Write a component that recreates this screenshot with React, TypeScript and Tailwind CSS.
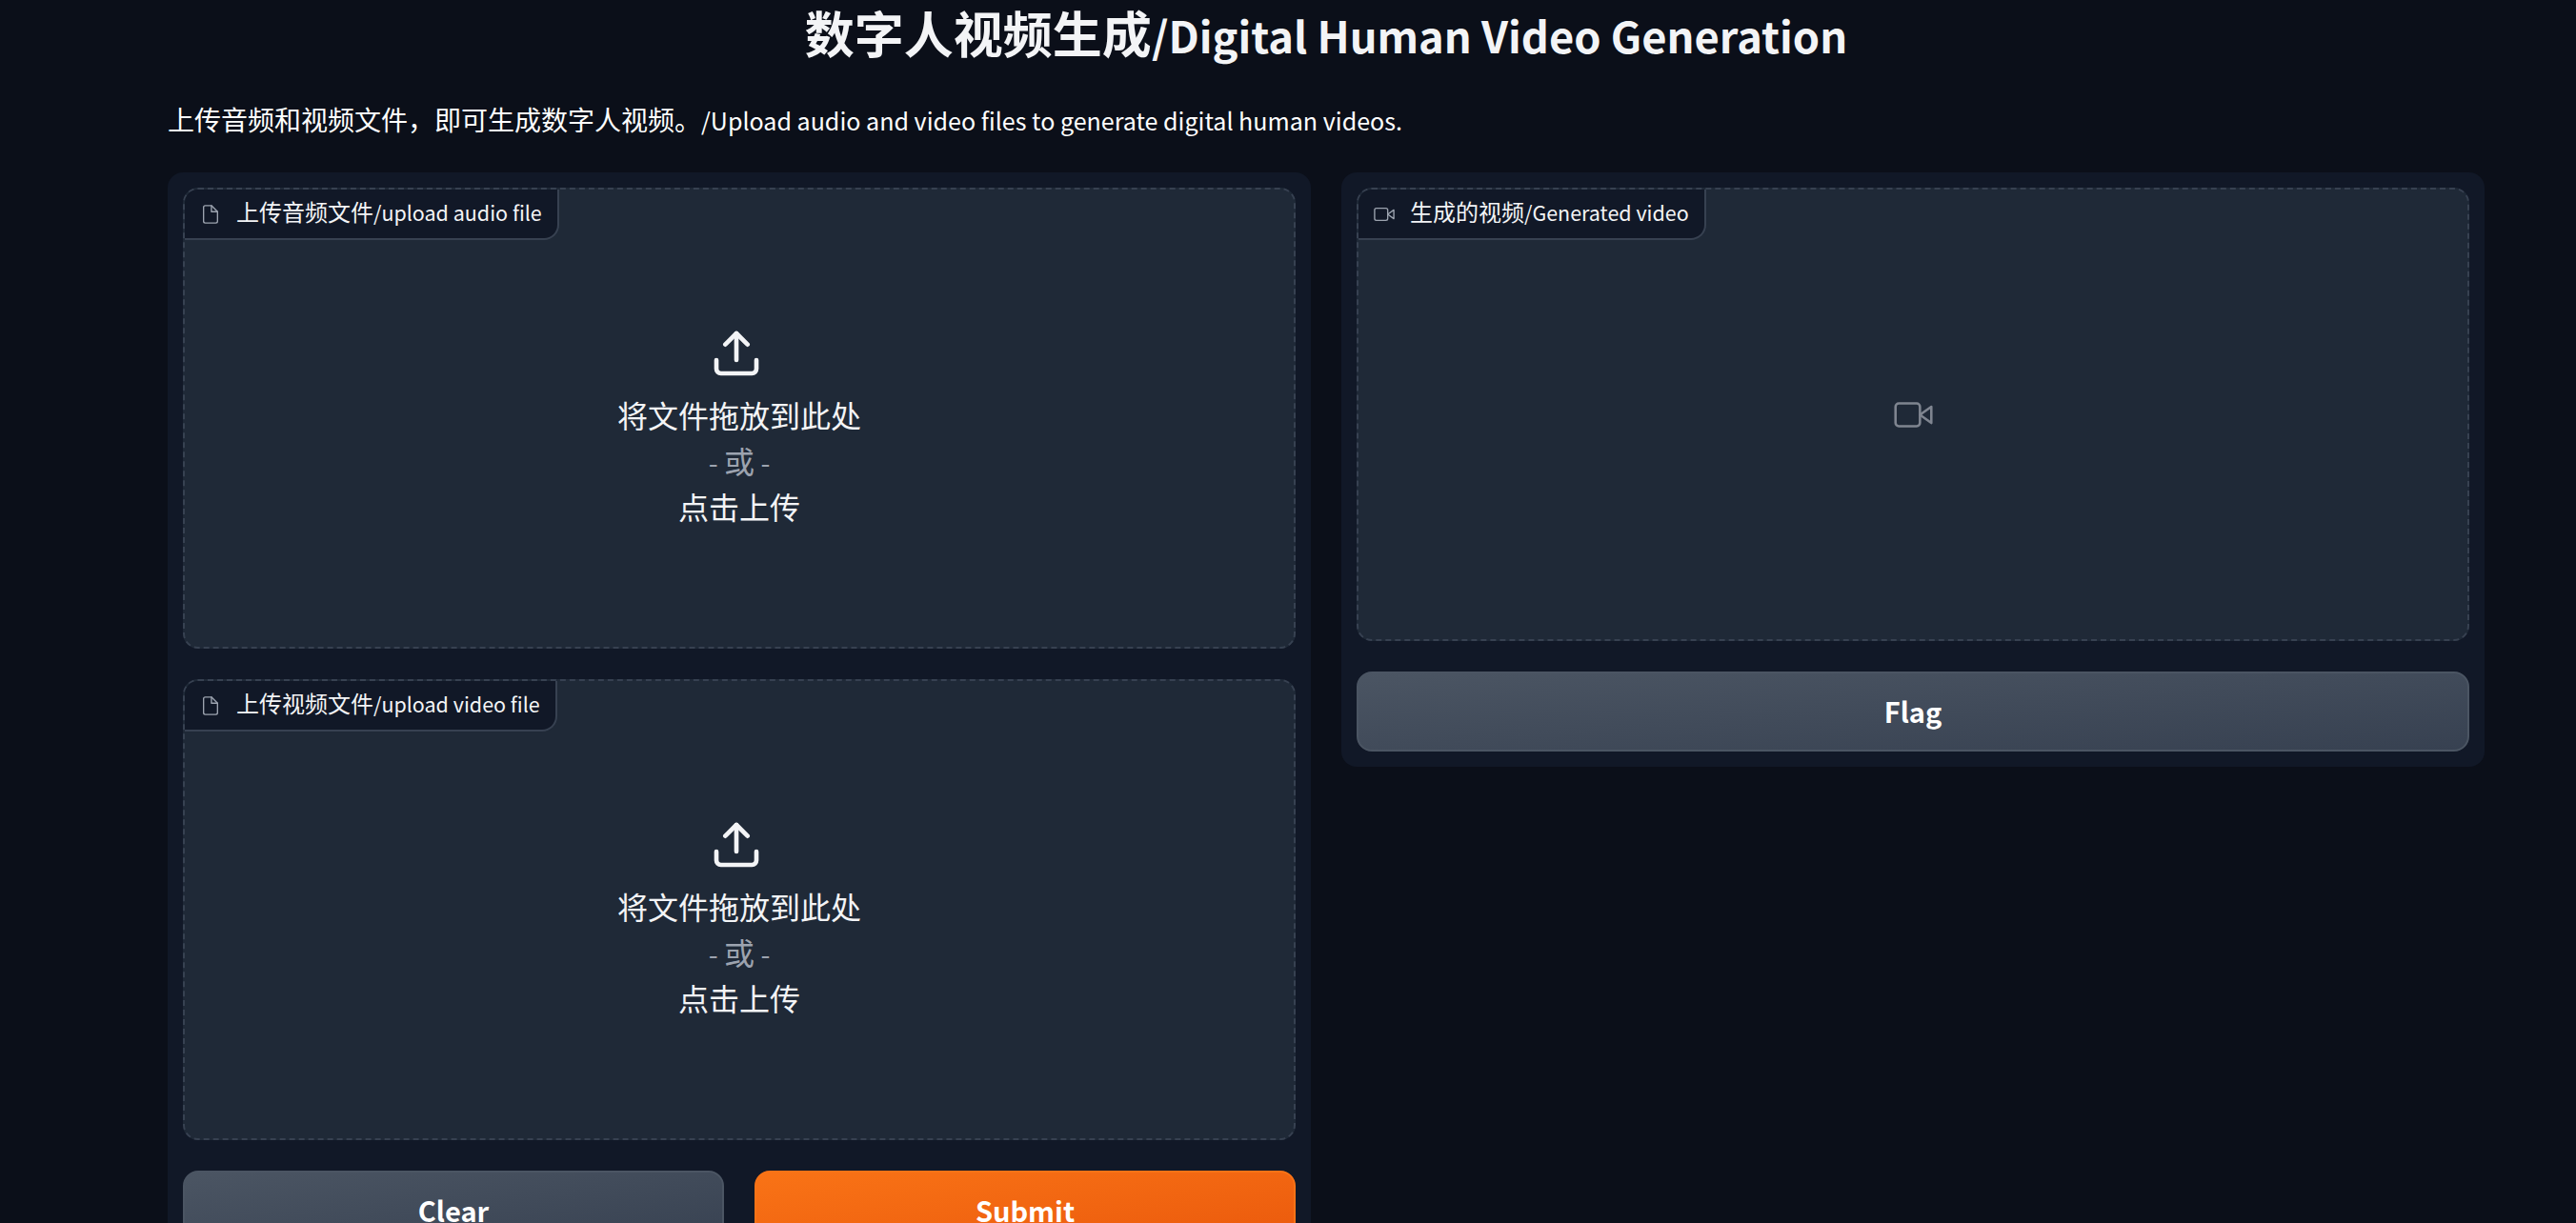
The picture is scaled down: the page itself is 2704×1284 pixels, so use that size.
const FONT = "font-['Noto_Sans_CJK_SC','Noto_Sans',sans-serif]";

function L({ children }: { children: React.ReactNode }) {
  return <span className="text-[0.895em] leading-none">{children}</span>;
}

function FileIcon() {
  return (
    <svg className="w-[22px] h-[22px] mr-[16px] shrink-0" viewBox="0 0 24 24" fill="none" stroke="#9ca3af" strokeWidth="1.5" strokeLinecap="round" strokeLinejoin="round">
      <path d="M13 2H6a2 2 0 0 0-2 2v16a2 2 0 0 0 2 2h12a2 2 0 0 0 2-2V9z" />
      <polyline points="13 2 13 9 20 9" />
    </svg>
  );
}

function VideoIcon({ className, color }: { className: string; color: string }) {
  return (
    <svg className={className} viewBox="0 0 24 24" fill="none" stroke={color} strokeWidth="1.5" strokeLinecap="round" strokeLinejoin="round">
      <polygon points="23 7 16 12 23 17 23 7" />
      <rect x="1" y="5" width="15" height="14" rx="2" ry="2" />
    </svg>
  );
}

function Label({ icon, cjk, latin }: { icon: React.ReactNode; cjk: string; latin: string }) {
  return (
    <div className="self-start flex items-center h-[53px] pl-[16px] pr-[16px] bg-[#111827] border-r-2 border-b-2 border-[#374151] rounded-br-[16px] text-[24px] leading-[32px] text-[#f3f4f6]">
      {icon}
      <span className="pb-[5px]">{cjk}<L>{latin}</L></span>
    </div>
  );
}

function UploadBlock({ cjk, latin }: { cjk: string; latin: string }) {
  return (
    <div className="h-[484px] flex flex-col bg-[#1f2937] border-2 border-dashed border-[#374151] rounded-[16px] overflow-hidden">
      <Label icon={<FileIcon />} cjk={cjk} latin={latin} />
      <div className="flex-1 flex flex-col items-center justify-center pb-[33px] text-[32px] leading-[48px] text-[#f3f4f6]">
        <svg className="w-[56px] h-[56px] mr-[6px] mb-[12px]" viewBox="0 0 24 24" fill="none" stroke="#f3f4f6" strokeWidth="2" strokeLinecap="round" strokeLinejoin="round">
          <path d="M21 15v4a2 2 0 0 1-2 2H5a2 2 0 0 1-2-2v-4" />
          <polyline points="17 8 12 3 7 8" />
          <line x1="12" y1="3" x2="12" y2="15" />
        </svg>
        <span>将文件拖放到此处</span>
        <span className="text-[#9ca3af]"><L>- </L>或<L> -</L></span>
        <span>点击上传</span>
      </div>
    </div>
  );
}

function Button({ children, kind }: { children: React.ReactNode; kind: "secondary" | "primary" }) {
  const cls =
    kind === "primary"
      ? "bg-gradient-to-br from-[#f97316] to-[#ea580c] border-[#f97316]"
      : "bg-gradient-to-br from-[#4b5563] to-[#374151] border-[#4b5563]";
  return (
    <button className={`h-[84px] w-full rounded-[16px] border-2 pb-[3px] text-[29px] leading-[40px] font-semibold text-white ${cls}`}>
      {children}
    </button>
  );
}

export default function App() {
  return (
    <div className={`${FONT} h-screen overflow-hidden bg-[#0b0f19] text-white`}>
      <div className="ml-[176px] w-[2432px]">
        <h1 className="text-center text-[52px] leading-[67px] font-bold text-[#f3f4f6]">数字人视频生成<span className="text-[0.87em] leading-none">/Digital Human Video Generation</span></h1>
        <p className="mt-[38px] text-[28px] leading-[40px] text-white">上传音频和视频文件，即可生成数字人视频。<L>/Upload audio and video files to generate digital human videos.</L></p>
        <div className="mt-[36px] grid grid-cols-2 gap-[32px] items-start">
          <div className="bg-[#111827] rounded-[16px] p-[16px] flex flex-col gap-[32px]">
            <UploadBlock cjk="上传音频文件" latin="/upload audio file" />
            <UploadBlock cjk="上传视频文件" latin="/upload video file" />
            <div className="grid grid-cols-2 gap-[32px]">
              <Button kind="secondary">Clear</Button>
              <Button kind="primary">Submit</Button>
            </div>
          </div>
          <div className="bg-[#111827] rounded-[16px] p-[16px] flex flex-col gap-[32px]">
            <div className="h-[476px] flex flex-col bg-[#1f2937] border-2 border-dashed border-[#374151] rounded-[16px] overflow-hidden">
              <Label icon={<VideoIcon className="w-[22px] h-[22px] mr-[16px] shrink-0" color="#9ca3af" />} cjk="生成的视频" latin="/Generated video" />
              <div className="flex-1 flex items-center justify-center pb-[53px]">
                <VideoIcon className="w-[41px] h-[41px]" color="#7f8590" />
              </div>
            </div>
            <Button kind="secondary">Flag</Button>
          </div>
        </div>
      </div>
    </div>
  );
}
